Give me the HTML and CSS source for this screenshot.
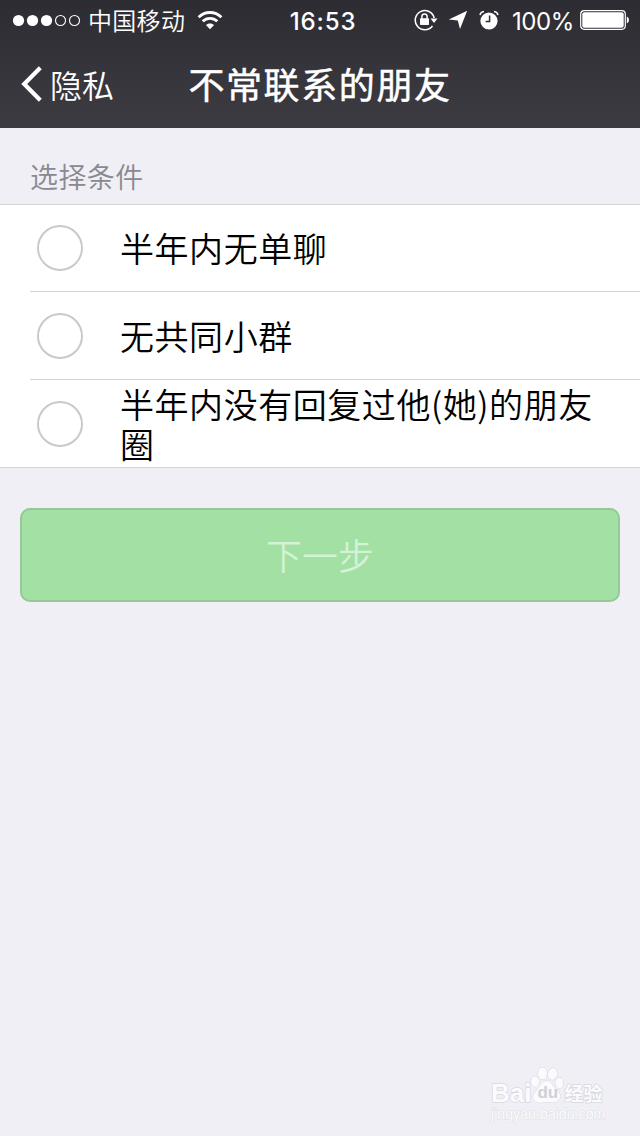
FILE: index.html
```html
<!DOCTYPE html>
<html lang="zh-CN">
<head>
<meta charset="utf-8">
<title>不常联系的朋友</title>
<link rel="stylesheet" href="styles.css">
</head>
<body>
<div class="screen">
  <header class="header">
    <div class="status">
      <div class="status-left">
        <svg class="signal" width="69" height="14" viewBox="0 0 69 14"><g fill="#fff"><circle cx="6.500" cy="7.500" r="5.6"/><circle cx="20.500" cy="7.500" r="5.6"/><circle cx="34.500" cy="7.500" r="5.6"/></g><g fill="none" stroke="#fff" stroke-width="1.1"><circle cx="48.500" cy="7.500" r="5"/><circle cx="62.500" cy="7.500" r="5"/></g></svg>
        <span class="carrier">中国移动</span>
        <svg class="wifi" width="26" height="20" viewBox="0 0 26 20"><g fill="none" stroke="#fff" stroke-width="2.8"><path d="M1.6 7.3C8 .9 18 .9 24.400 7.300"/><path d="M5.700 11.300C9.800 7.300 16.200 7.300 20.300 11.300"/></g><path d="M13 19.200L8.900 15.100C11.200 13 14.800 13 17.100 15.100Z" fill="#fff"/></svg>
      </div>
      <span class="time">16:53</span>
      <div class="status-right">
        <svg class="lock" width="24" height="22" viewBox="0 0 24 22"><path d="M18.500 17A9.600 9.600 0 1 1 20.200 9" fill="none" stroke="#fff" stroke-width="1.500"/><path d="M16.500 9.500H23.500L20 14Z" fill="#fff"/><rect x="6" y="9.300" width="9" height="6.700" rx=".8" fill="#fff"/><path d="M7.900 10V7.700a2.600 2.600 0 0 1 5.200 0V10" fill="none" stroke="#fff" stroke-width="1.500"/></svg>
        <svg class="arrow" width="20" height="20" viewBox="0 0 20 20"><path d="M19.200.8L12 19L9.800 10.400L.8 9.600Z" fill="#fff"/></svg>
        <svg class="alarm" width="20" height="21" viewBox="0 0 20 21"><circle cx="10" cy="11" r="8.600" fill="#fff"/><path d="M10.600 5.500V11.600H6.600" fill="none" stroke="#302f36" stroke-width="1.500"/><path d="M1 5Q1.600 2 5 1.600M19 5Q18.400 2 15 1.600" fill="none" stroke="#fff" stroke-width="1.500"/></svg>
        <span class="percent">100%</span>
        <svg class="battery" width="50" height="20" viewBox="0 0 50 20"><rect x=".7" y=".7" width="44.600" height="18.600" rx="3.500" fill="none" stroke="#fff" stroke-width="1.200"/><rect x="2.300" y="2.300" width="41.400" height="15.400" rx="2" fill="#fff"/><path d="M46.800 6.500Q49 7.200 49 10T46.800 13.500Z" fill="#fff"/></svg>
      </div>
    </div>
    <nav class="nav">
      <div class="back">
        <svg width="22" height="36" viewBox="0 0 22 36"><path d="M20.300 1.700L4.200 18L20.300 34.300" fill="none" stroke="#fff" stroke-width="4.200"/></svg>
        <span class="back-text">隐私</span>
      </div>
      <h1 class="title">不常联系的朋友</h1>
      <div></div>
    </nav>
  </header>
  <h2 class="section">选择条件</h2>
  <ul class="list">
    <li class="row"><span class="radio"></span><div class="label">半年内无单聊</div></li>
    <li class="row"><span class="radio"></span><div class="label">无共同小群</div></li>
    <li class="row"><span class="radio"></span><div class="label">半年内没有回复过他(她)的朋友圈</div></li>
  </ul>
  <button class="next" type="button" disabled>下一步</button>
  <footer class="watermark">
    <div class="brand">
      <span class="bai">Bai</span>
      <span class="paw"><svg width="34" height="38" viewBox="0 0 34 38"><g fill="#fbfbfd" stroke="#d6d6dd" stroke-width="1"><ellipse cx="5" cy="15.500" rx="4" ry="5.200"/><ellipse cx="12.500" cy="7.500" rx="4.500" ry="6"/><ellipse cx="22.500" cy="8" rx="4.500" ry="6" transform="rotate(12 22.500 8)"/><ellipse cx="29.300" cy="17" rx="4" ry="5.200"/><path d="M17 15C21 15 23 20 27 24C34 31 28 37 22 36.500Q17 35.500 12 36.500C4 38 0 31 6 25C10 21 12 15 17 15Z"/></g></svg><span class="du">du</span></span>
      <span class="jingyan">经验</span>
    </div>
    <div class="site">jingyan.baidu.com</div>
  </footer>
</div>
</body>
</html>
```
FILE: styles.css
```css
* { box-sizing: border-box; }
body {
  margin: 0;
  font-family: "Noto Sans CJK SC", sans-serif;
}
.screen {
  display: flex;
  flex-direction: column;
  width: 640px;
  height: 1136px;
  background: #efeff5;
  overflow: hidden;
}
.header {
  height: 128px;
  background: linear-gradient(#2d2c33, #3d3c43);
  color: #fff;
}
.status {
  display: grid;
  grid-template-columns: 1fr auto 1fr;
  align-items: center;
  height: 40px;
  padding: 0 10px 0 12px;
}
.status-left, .status-right { display: flex; align-items: center; }
.status-right { justify-content: flex-end; }
.carrier {
  margin-left: 7px;
  font-size: 24px;
  font-weight: 350;
  letter-spacing: 0.300px;
  line-height: 40px;
}
.wifi { margin-left: 12px; }
.time {
  padding: 2px 0 0 4px;
  font-family: Inter, sans-serif;
  font-size: 24px;
  font-weight: 550;
  letter-spacing: 0.900px;
}
.arrow { margin-left: 10px; }
.alarm { margin-left: 11px; }
.percent {
  margin: 0 6px 0 13px;
  padding-top: 2px;
  font-family: Inter, sans-serif;
  font-size: 24px;
  font-weight: 400;
  letter-spacing: -0.400px;
}
.nav {
  display: grid;
  grid-template-columns: 1fr auto 1fr;
  align-items: center;
  height: 88px;
  padding: 0 20px;
}
.back { display: flex; align-items: center; }
.back-text {
  margin-left: 8px;
  font-size: 32px;
  font-weight: 350;
  line-height: 40px;
}
.title {
  margin: 0;
  padding-bottom: 2px;
  font-size: 36px;
  font-weight: 400;
  letter-spacing: 1.600px;
  line-height: 50px;
  -webkit-text-stroke: 0.500px #fff;
}
.section {
  height: 76px;
  margin: 0;
  padding: 28px 30px 0;
  color: #89898f;
  font-size: 28px;
  font-weight: 350;
  letter-spacing: 0.400px;
  line-height: 40px;
}
.list {
  margin: 0;
  padding: 0;
  list-style: none;
  background: #fff;
  border-top: 1px solid #d2d2d6;
  border-bottom: 1px solid #d2d2d6;
}
.row {
  display: flex;
  align-items: center;
  height: 86px;
  margin-left: 30px;
}
.row + .row {
  height: 88px;
  border-top: 1px solid #d5d5d9;
}
.radio {
  flex: none;
  width: 46px;
  height: 46px;
  margin: 0 37px 0 7px;
  border: 2px solid #c9c9c9;
  border-radius: 50%;
}
.label {
  width: 490px;
  color: #000;
  font-size: 34px;
  font-weight: 350;
  letter-spacing: 0.550px;
  line-height: 40px;
}
.next {
  height: 94px;
  margin: 40px 20px 0;
  padding: 0 0 2px;
  border: 2px solid #94c997;
  border-radius: 10px;
  background: #a2e0a3;
  color: #d4f2d5;
  font-family: inherit;
  font-size: 36px;
  font-weight: 350;
  line-height: 50px;
}
.watermark {
  width: 118px;
  margin: auto 31px 14px auto;
  color: #fbfbfd;
  -webkit-text-stroke: 1.400px #d8d8df;
  paint-order: stroke fill;
}
.brand { display: flex; align-items: flex-end; height: 40px; }
.bai {
  font: bold 26px/25px "Liberation Sans", sans-serif;
}
.paw { position: relative; flex: none; width: 34px; height: 38px; margin: 0 0 2px -1px; }
.paw svg { display: block; }
.du {
  position: absolute;
  left: 7px;
  top: 18px;
  color: #d0d0d8;
  font: bold 17px/18px "Liberation Sans", sans-serif;
  -webkit-text-stroke: 0;
}
.jingyan {
  font-size: 19px;
  font-weight: 700;
  line-height: 26px;
}
.site {
  height: 16px;
  font: 14.200px/16px "Liberation Sans", sans-serif;
  -webkit-text-stroke: 1px #e0e0e6;
}
```
